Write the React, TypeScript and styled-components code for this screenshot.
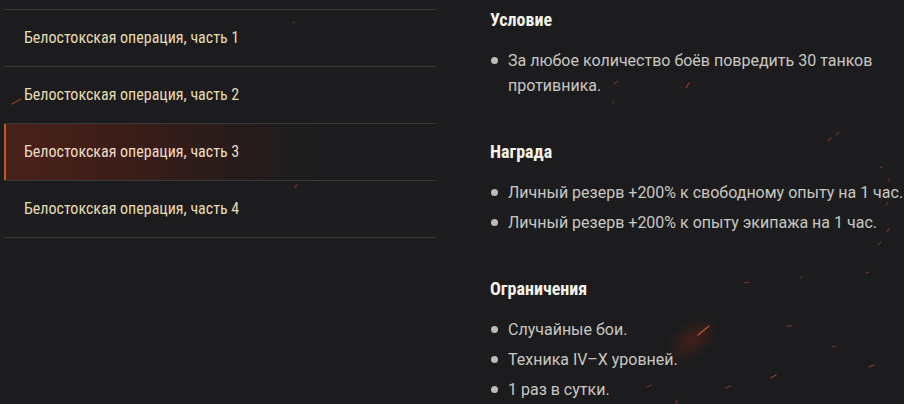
import React from 'react';
import styled, { createGlobalStyle } from 'styled-components';

const GlobalStyle = createGlobalStyle`
  html, body {
    margin: 0;
    padding: 0;
    background: #1c1c1e;
  }
  body {
    font-family: Roboto, "Liberation Sans", sans-serif;
  }
`;

const Page = styled.div`
  position: relative;
  display: flex;
  align-items: flex-start;
  gap: 54px;
  width: 904px;
  height: 404px;
  padding: 9px 0 0 4px;
  box-sizing: border-box;
  overflow: hidden;
  background: #1c1c1e;
`;

const Menu = styled.ul`
  list-style: none;
  margin: 0;
  padding: 0;
  width: 432px;
  flex-shrink: 0;
  border-bottom: 1px solid #383838;
`;

const MenuItem = styled.li<{ $active?: boolean }>`
  display: flex;
  align-items: center;
  height: 56px;
  padding-left: 20px;
  padding-bottom: 1px;
  box-sizing: border-box;
  height: 57px;
  border-top: 1px solid #383838;
  font-family: "Roboto Condensed", "Liberation Sans Narrow", "DejaVu Sans Condensed", sans-serif;
  font-size: 16px;
  font-weight: 400;
  color: ${(p) => (p.$active ? '#eedcc4' : '#e6dbb2')};
  box-shadow: ${(p) => (p.$active ? 'inset 2px 0 0 #c4552f' : 'none')};
  background: ${(p) =>
    p.$active
      ? 'linear-gradient(90deg, #4a2119 0%, #3c1d18 28%, #271c1b 52%, #1c1c1e 72%)'
      : 'transparent'};
`;

const Details = styled.div`
  display: flex;
  flex-direction: column;
  gap: 44px;
  padding-top: 1px;
  width: 430px;
  flex-shrink: 0;
`;

const Section = styled.section`
  display: flex;
  flex-direction: column;
`;

const Heading = styled.h3`
  margin: 0 0 18px;
  font-family: "Roboto Condensed", "Liberation Sans Narrow", "DejaVu Sans Condensed", sans-serif;
  font-size: 18px;
  line-height: 20px;
  font-weight: 700;
  color: #f4f1e8;
`;

const List = styled.ul`
  list-style: none;
  margin: 0;
  padding: 0;
  display: flex;
  flex-direction: column;
  gap: 5px;
`;

const Item = styled.li<{ $wrap?: number }>`
  position: relative;
  padding-left: 18px;
  max-width: ${(p) => (p.$wrap ? `${p.$wrap}px` : 'none')};
  font-size: 16px;
  line-height: 25px;
  color: #c9c7c2;

  &::before {
    content: '';
    position: absolute;
    left: 1px;
    top: 9px;
    width: 7px;
    height: 7px;
    border-radius: 50%;
    background: #bdbbb6;
  }
`;

const Sparks = styled.svg`
  position: absolute;
  left: 0;
  top: 0;
  pointer-events: none;
`;

const sparks: [number, number, number, number, number][] = [
  [12, 104, 21, 99, 0.6],
  [293, 23, 295, 22, 0.35],
  [295, 187, 297, 185, 0.45],
  [686, 88, 689, 83, 0.55],
  [828, 141, 831, 138, 0.45],
  [836, 135, 839, 132, 0.35],
  [880, 168, 882, 167, 0.45],
  [888, 182, 889, 179, 0.35],
  [886, 205, 888, 202, 0.35],
  [887, 231, 889, 229, 0.45],
  [878, 245, 881, 242, 0.35],
  [744, 283, 749, 282, 0.5],
  [800, 278, 802, 277, 0.35],
  [866, 273, 869, 272, 0.45],
  [698, 335, 709, 326, 0.9],
  [787, 326, 792, 326, 0.5],
  [832, 347, 836, 346, 0.45],
  [869, 367, 874, 365, 0.55],
  [771, 378, 776, 375, 0.6],
  [726, 388, 731, 386, 0.5],
  [647, 387, 651, 385, 0.45],
  [676, 403, 677, 400, 0.45],
  [614, 84, 618, 81, 0.35],
  [612, 103, 614, 102, 0.3],
];

const Embers: React.FC = () => (
  <Sparks width="904" height="404" viewBox="0 0 904 404">
    <defs>
      <radialGradient id="glow" cx="50%" cy="50%" r="50%">
        <stop offset="0%" stopColor="#7a2612" stopOpacity="0.4" />
        <stop offset="100%" stopColor="#7a2612" stopOpacity="0" />
      </radialGradient>
    </defs>
    <ellipse cx="692" cy="340" rx="30" ry="18" fill="url(#glow)" transform="rotate(-35 692 340)" />
    {sparks.map(([x1, y1, x2, y2, o], i) => (
      <line
        key={i}
        x1={x1}
        y1={y1}
        x2={x2}
        y2={y2}
        stroke="#e0582c"
        strokeWidth={1.2}
        strokeLinecap="round"
        opacity={o}
      />
    ))}
  </Sparks>
);

const parts = [1, 2, 3, 4];

export default function App() {
  return (
    <>
      <GlobalStyle />
      <Page>
        <Menu>
          {parts.map((n) => (
            <MenuItem key={n} $active={n === 3}>
              Белостокская операция, часть {n}
            </MenuItem>
          ))}
        </Menu>
        <Details>
          <Section>
            <Heading>Условие</Heading>
            <List>
              <Item $wrap={400}>За любое количество боёв повредить 30 танков противника.</Item>
            </List>
          </Section>
          <Section>
            <Heading>Награда</Heading>
            <List>
              <Item>Личный резерв +200% к свободному опыту на 1 час.</Item>
              <Item>Личный резерв +200% к опыту экипажа на 1 час.</Item>
            </List>
          </Section>
          <Section>
            <Heading>Ограничения</Heading>
            <List>
              <Item>Случайные бои.</Item>
              <Item>Техника IV–X уровней.</Item>
              <Item>1 раз в сутки.</Item>
            </List>
          </Section>
        </Details>
        <Embers />
      </Page>
    </>
  );
}
